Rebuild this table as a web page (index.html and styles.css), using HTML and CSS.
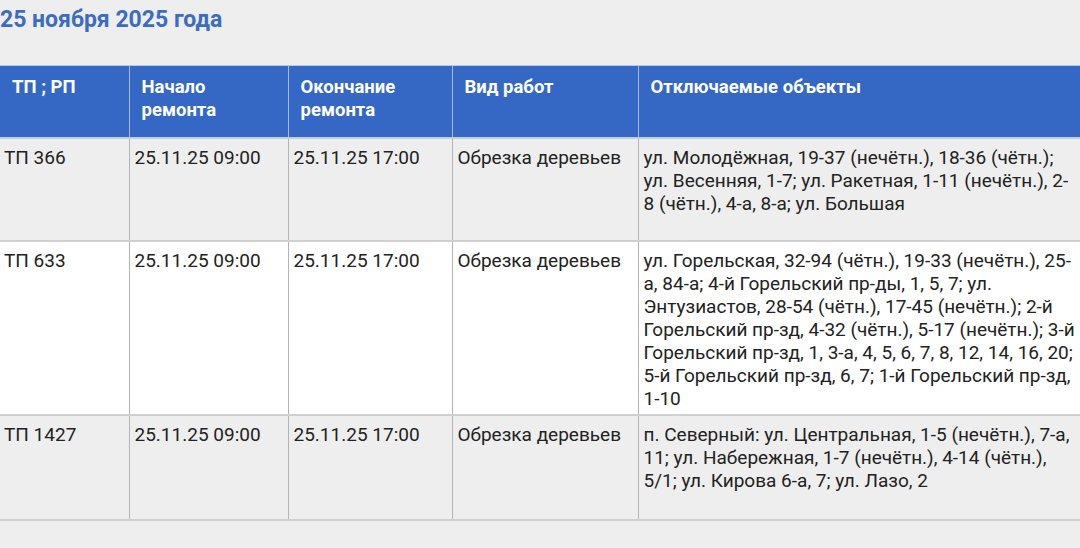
FILE: index.html
```html
<!DOCTYPE html>
<html lang="ru">
<head>
<meta charset="utf-8">
<link rel="stylesheet" href="styles.css">
</head>
<body>
<div class="page">
  <h2 class="title">25 ноября 2025 года</h2>
  <table class="outages">
    <colgroup>
      <col class="c1"><col class="c2"><col class="c3"><col class="c4"><col class="c5">
    </colgroup>
    <thead>
      <tr class="head">
        <th>ТП ; РП</th>
        <th>Начало ремонта</th>
        <th>Окончание ремонта</th>
        <th>Вид работ</th>
        <th>Отключаемые объекты</th>
      </tr>
    </thead>
    <tbody>
      <tr class="row r1 alt">
        <td>ТП 366</td>
        <td>25.11.25 09:00</td>
        <td>25.11.25 17:00</td>
        <td>Обрезка деревьев</td>
        <td>ул. Молодёжная, 19-37 (нечётн.), 18-36 (чётн.); ул. Весенняя, 1-7; ул. Ракетная, 1-11 (нечётн.), 2-8 (чётн.), 4-а, 8-а; ул. Большая</td>
      </tr>
      <tr class="row r2">
        <td>ТП 633</td>
        <td>25.11.25 09:00</td>
        <td>25.11.25 17:00</td>
        <td>Обрезка деревьев</td>
        <td>ул. Горельская, 32-94 (чётн.), 19-33 (нечётн.), 25-а, 84-а; 4-й Горельский пр-ды, 1, 5, 7; ул. Энтузиастов, 28-54 (чётн.), 17-45 (нечётн.); 2-й Горельский пр-зд, 4-32 (чётн.), 5-17 (нечётн.); 3-й Горельский пр-зд, 1, 3-а, 4, 5, 6, 7, 8, 12, 14, 16, 20; 5-й Горельский пр-зд, 6, 7; 1-й Горельский пр-зд, 1-10</td>
      </tr>
      <tr class="row r3 alt">
        <td>ТП 1427</td>
        <td>25.11.25 09:00</td>
        <td>25.11.25 17:00</td>
        <td>Обрезка деревьев</td>
        <td>п. Северный: ул. Центральная, 1-5 (нечётн.), 7-а, 11; ул. Набережная, 1-7 (нечётн.), 4-14 (чётн.), 5/1; ул. Кирова 6-а, 7; ул. Лазо, 2</td>
      </tr>
    </tbody>
  </table>
</div>
</body>
</html>
```

FILE: styles.css
```css
html, body {
  margin: 0;
  padding: 0;
  background: #eeeeee;
  overflow: hidden;
}

.page {
  width: 1080px;
  height: 548px;
  overflow: hidden;
  font-family: Roboto, "Noto Sans", sans-serif;
}

.title {
  margin: 0;
  padding: 6px 0 0 0;
  height: 65px;
  box-sizing: border-box;
  font-size: 23px;
  line-height: 27px;
  font-weight: 700;
  color: #3b6cc1;
}

.outages {
  width: 1086px;
  border-collapse: collapse;
  table-layout: fixed;
  font-size: 19px;
  line-height: 23px;
  color: #222222;
}

.c1 { width: 129px; }
.c2 { width: 159px; }
.c3 { width: 164px; }
.c4 { width: 186px; }
.c5 { width: auto; }

.head {
  height: 72px;
  background: #3568c4;
  border-top: 1px solid #b9c8e2;
}

.head th {
  text-align: left;
  vertical-align: top;
  padding: 10px 12px 0 12px;
  color: #ffffff;
  font-weight: 700;
  font-size: 18.5px;
  line-height: 23px;
  border-left: 1px solid #a9b9d6;
  border-right: 1px solid #a9b9d6;
  border-bottom: 2px solid #c6cede;
}

.row td {
  vertical-align: top;
  padding: 7px 7px 0 5px;
  border-left: 1px solid #b4b4b4;
  border-right: 1px solid #b4b4b4;
  border-bottom: 2px solid #d0d0d0;
}

.head th:first-child,
.row td:first-child {
  border-left: none;
}

.row td:first-child {
  padding-left: 4px;
}

.row { background: #ffffff; }
.row.alt { background: #eeeeee; }

.r1 { height: 103px; }
.r2 { height: 174px; }
.r3 { height: 105px; }
```
